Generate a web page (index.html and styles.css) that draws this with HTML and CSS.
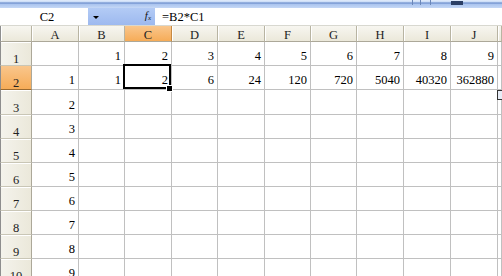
FILE: index.html
```html
<!DOCTYPE html>
<html>
<head>
<meta charset="utf-8">
<link rel="stylesheet" href="styles.css">
</head>
<body>
<div class="app">
  <div class="toolbar">
    <span class="tb-mark m1"></span><span class="tb-mark m2"></span><span class="tb-mark m3"></span><span class="tb-block"></span>
  </div>
  <div class="fbar">
    <div class="namebox">C2</div>
    <div class="fctl">
      <span class="arrow"></span>
      <span class="fx"><i>f</i><sub>x</sub></span>
    </div>
    <div class="formula">=B2*C1</div>
  </div>
  <div class="sheet">
    <div class="hd corner"></div>
    <div class="hd">A</div><div class="hd">B</div><div class="hd sel">C</div><div class="hd">D</div><div class="hd">E</div><div class="hd">F</div><div class="hd">G</div><div class="hd">H</div><div class="hd">I</div><div class="hd">J</div><div class="hd"></div>

    <div class="rh">1</div>
    <div class="c"></div><div class="c">1</div><div class="c">2</div><div class="c">3</div><div class="c">4</div><div class="c">5</div><div class="c">6</div><div class="c">7</div><div class="c">8</div><div class="c">9</div><div class="c"></div>

    <div class="rh sel">2</div>
    <div class="c">1</div><div class="c">1</div><div class="c active">2</div><div class="c">6</div><div class="c">24</div><div class="c">120</div><div class="c">720</div><div class="c">5040</div><div class="c">40320</div><div class="c">362880</div><div class="c"></div>

    <div class="rh">3</div>
    <div class="c">2</div><div class="c"></div><div class="c"></div><div class="c"></div><div class="c"></div><div class="c"></div><div class="c"></div><div class="c"></div><div class="c"></div><div class="c"></div><div class="c"></div>

    <div class="rh">4</div>
    <div class="c">3</div><div class="c"></div><div class="c"></div><div class="c"></div><div class="c"></div><div class="c"></div><div class="c"></div><div class="c"></div><div class="c"></div><div class="c"></div><div class="c"></div>

    <div class="rh">5</div>
    <div class="c">4</div><div class="c"></div><div class="c"></div><div class="c"></div><div class="c"></div><div class="c"></div><div class="c"></div><div class="c"></div><div class="c"></div><div class="c"></div><div class="c"></div>

    <div class="rh">6</div>
    <div class="c">5</div><div class="c"></div><div class="c"></div><div class="c"></div><div class="c"></div><div class="c"></div><div class="c"></div><div class="c"></div><div class="c"></div><div class="c"></div><div class="c"></div>

    <div class="rh">7</div>
    <div class="c">6</div><div class="c"></div><div class="c"></div><div class="c"></div><div class="c"></div><div class="c"></div><div class="c"></div><div class="c"></div><div class="c"></div><div class="c"></div><div class="c"></div>

    <div class="rh">8</div>
    <div class="c">7</div><div class="c"></div><div class="c"></div><div class="c"></div><div class="c"></div><div class="c"></div><div class="c"></div><div class="c"></div><div class="c"></div><div class="c"></div><div class="c"></div>

    <div class="rh">9</div>
    <div class="c">8</div><div class="c"></div><div class="c"></div><div class="c"></div><div class="c"></div><div class="c"></div><div class="c"></div><div class="c"></div><div class="c"></div><div class="c"></div><div class="c"></div>

    <div class="rh">10</div>
    <div class="c">9</div><div class="c"></div><div class="c"></div><div class="c"></div><div class="c"></div><div class="c"></div><div class="c"></div><div class="c"></div><div class="c"></div><div class="c"></div><div class="c"></div>

    <div class="smarttag"></div>
  </div>
</div>
</body>
</html>
```

FILE: styles.css
```css
* { box-sizing: border-box; }
html, body { margin: 0; padding: 0; background: #fff; }
body {
  width: 502px;
  height: 276px;
  overflow: hidden;
  font-family: "Liberation Serif", "Times New Roman", serif;
  font-size: 12.5px;
  color: #000;
}

.app { display: flex; flex-direction: column; width: 502px; font-family: "Liberation Serif", serif; }

.toolbar {
  position: relative;
  height: 8px;
  background: linear-gradient(#e3edfb 0, #c8dbf7 2px, #5f82c4 3px, #a9c3ee 4px, #c5d8f6 8px);
}
.tb-mark { position: absolute; top: 0; width: 1px; height: 5px; background: #6a86b8; }
.tb-mark.m1 { left: 412px; }
.tb-mark.m2 { left: 420px; }
.tb-mark.m3 { left: 430px; }
.tb-block { position: absolute; left: 451px; top: 1px; width: 12px; height: 4px; background: #2b3f66; }

.fbar {
  display: flex;
  height: 18px;
  border-bottom: 1px solid #d8d8d0;
}
.namebox {
  width: 88px;
  display: flex;
  align-items: center;
  justify-content: center;
  padding-left: 6px;
  line-height: 12px;
  background: #fff;
}
.fctl {
  width: 67px;
  display: flex;
  align-items: center;
  justify-content: space-between;
  padding: 0 4px 0 5px;
  background: linear-gradient(#b3cbf5, #9db9ef);
}
.arrow {
  width: 0; height: 0;
  border-left: 3px solid transparent;
  border-right: 3px solid transparent;
  border-top: 3px solid #000;
  margin-top: 1px;
}
.fx { font-size: 11px; line-height: 11px; color: #111; }
.fx i { font-style: italic; }
.fx sub { font-size: 7px; font-style: italic; vertical-align: -1px; }
.formula {
  flex: 1;
  display: flex;
  align-items: center;
  padding-left: 7px;
  line-height: 12px;
  background: #fff;
}

.sheet {
  position: relative;
  display: grid;
  grid-template-columns: 32px 47px 46px 47px 46px 47px 46px 46px 47px 47px 47px 1fr;
  grid-template-rows: 16px 24px 24px 25px repeat(7, 24px);
}

.hd {
  display: flex;
  align-items: flex-end;
  justify-content: center;
  line-height: 12px;
  color: #222;
  background: linear-gradient(#f7f6f0, #ebe8da);
  border-right: 1px solid #b8b4a2;
  border-bottom: 1px solid #aca899;
  box-shadow: inset 1px 0 #fff;
}
.hd.corner { border-left: 1px solid #8e8e8e; }
.hd.sel {
  background: linear-gradient(#f9c68c, #f6ac58);
  box-shadow: none;
  border-right-color: #c58a43;
}

.rh {
  display: flex;
  align-items: flex-end;
  justify-content: center;
  line-height: 12px;
  color: #222;
  background: linear-gradient(90deg, #f4f3ec, #ebe8da);
  border-left: 1px solid #8e8e8e;
  border-right: 1px solid #aca899;
  border-bottom: 1px solid #c9c6b6;
  box-shadow: inset 0 1px #fff;
}
.rh.sel {
  background: linear-gradient(#f9c68c, #f6ac58);
  box-shadow: none;
  border-bottom-color: #9a6a30;
}

.c {
  position: relative;
  display: flex;
  align-items: flex-end;
  justify-content: flex-end;
  padding: 0 3px 3px 0;
  line-height: 12px;
  border-right: 1px solid #c0c0c0;
  border-bottom: 1px solid #c0c0c0;
}
.c.active::after {
  content: "";
  position: absolute;
  left: -2px; top: -2px; right: 0; bottom: 0;
  border: 2px solid #000;
}
.c.active::before {
  content: "";
  position: absolute;
  right: -2px; bottom: -3px;
  width: 5px; height: 5px;
  background: #000;
  border: 1px solid #fff;
  z-index: 2;
}

.smarttag {
  position: absolute;
  left: 497px; top: 64px;
  width: 8px; height: 10px;
  border: 1px solid #333;
  background: #e8edf7;
}
```
